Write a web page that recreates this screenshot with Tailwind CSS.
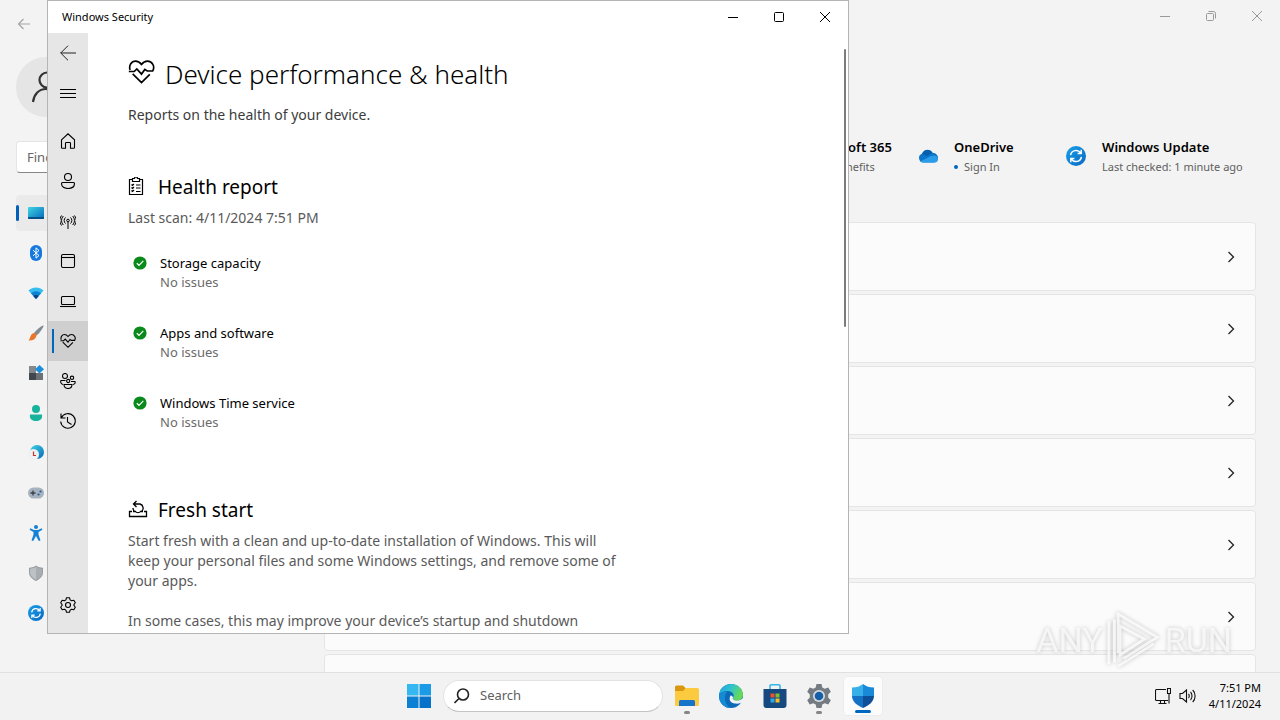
<!DOCTYPE html>
<html lang="en">
<head>
    <meta charset="UTF-8">
    <meta name="viewport" content="width=device-width, initial-scale=1.0">
    <title>Windows Security</title>
    <script src="https://cdn.jsdelivr.net/npm/@tailwindcss/browser@4"></script>
</head>
<body class="h-screen flex flex-col overflow-hidden bg-[#f3f3f3] font-['Noto_Sans','Open_Sans',sans-serif] text-black">

    <!-- Shared symbols -->
    <svg class="absolute w-0 h-0">
        <defs>
            <linearGradient id="blue" x1="0" y1="0" x2="1" y2="1"><stop offset="0" stop-color="#1aa0e8"/><stop offset="1" stop-color="#0869c3"/></linearGradient>
            <linearGradient id="teal" x1="0" y1="0" x2="1" y2="1"><stop offset="0" stop-color="#3fd5e6"/><stop offset="1" stop-color="#0668b8"/></linearGradient>
        </defs>
        <symbol id="chevron" viewBox="0 0 12 12"><path d="M3.5 1 8.5 6l-5 5" fill="none" stroke="#222" stroke-width="1.3"/></symbol>
        <symbol id="check" viewBox="0 0 14 14"><circle cx="7" cy="7" r="6.6" fill="#0b8a1c"/><path d="M3.8 7.2 6 9.3l4.300-4.400" fill="none" stroke="#fff" stroke-width="1.200"/></symbol>
        <symbol id="update" viewBox="0 0 20 20">
            <circle cx="10" cy="10" r="10" fill="url(#blue)"/>
            <path d="M4.600 9.200a5.500 5.500 0 0 1 10-2.300M15.400 10.800a5.500 5.500 0 0 1-10 2.300M15.200 3.800v3.600h-3.600M4.800 16.200v-3.600h3.600" fill="none" stroke="#fff" stroke-width="1.500"/>
        </symbol>
        <symbol id="heart" viewBox="0 0 26 24">
            <path d="M2 10C.500 5.500 3.500 1.500 7.200 1.500c2.600 0 4.300 1.200 5.800 3.200 1.500-2 3.200-3.200 5.800-3.200 4.500 0 7.500 5 5 9.500h-5.300l-2.300-1.500-3.200 4.500-4.500-5-2.500 2.500H.800M4.500 13.800 13 22.300l8-8"/>
        </symbol>
    </svg>

    <div class="relative flex-1 min-h-0 overflow-hidden">

        <!-- Settings window -->
        <div class="h-full flex">
            <aside class="w-[324px] shrink-0 px-4">
                <button aria-label="Back" class="block mt-4 h-4">
                    <svg class="w-4 h-4" viewBox="0 0 16 16" fill="none" stroke="#a6a6a6" stroke-width="1.200"><path d="M14 8H2.500M7.500 3l-5 5 5 5"/></svg>
                </button>
                <div class="mt-[25px] w-[60px] h-[60px] rounded-full bg-[#e5e5e5] flex items-center justify-center">
                    <svg class="w-8 h-8" viewBox="0 0 32 32" fill="none" stroke="#333" stroke-width="2.200"><circle cx="17" cy="9" r="7.500"/><path d="M3 31c1-8 6-13 13-13s12 5 13 13"/></svg>
                </div>
                <input type="text" aria-label="Find a setting" placeholder="Find a setting" class="mt-6 w-full h-8 px-2.5 rounded bg-white border border-[#e5e5e5] border-b-[#868686] text-[13px] placeholder:text-[#666]">
                <nav class="mt-[22px] flex flex-col gap-1">
                    <a href="#" aria-label="System" class="relative h-9 pl-3 rounded bg-[#eaeaea] flex items-center">
                        <span class="absolute left-0 w-[3px] h-4 rounded bg-[#005fb8]"></span>
                        <svg class="w-4 h-4" viewBox="0 0 16 16"><rect y="2" width="16" height="12" rx="1" fill="url(#teal)"/><path d="M0 12h16v1a1 1 0 0 1-1 1H1a1 1 0 0 1-1-1z" fill="#075087"/></svg>
                    </a>
                    <a href="#" aria-label="Bluetooth &amp; devices" class="h-9 pl-3 flex items-center">
                        <svg class="w-4 h-4" viewBox="0 0 16 16"><rect x="2" width="12" height="16" rx="6" fill="#1578df"/><path d="m5 5.200 6 5.300-3 2.700V2.800l3 2.700-6 5.300" fill="none" stroke="#fff"/></svg>
                    </a>
                    <a href="#" aria-label="Network &amp; internet" class="h-9 pl-3 flex items-center">
                        <svg class="w-4 h-4" viewBox="0 0 16 16"><path d="M.5 5.500c4-4 11-4 15 0L8 14z" fill="#36bdf0"/><path d="M3 8.200c3-2.700 7-2.700 10 0L8 14z" fill="#0d82d0"/><path d="M5.300 11c1.700-1.400 3.700-1.400 5.400 0L8 14z" fill="#0a3e87"/></svg>
                    </a>
                    <a href="#" aria-label="Personalization" class="h-9 pl-3 flex items-center">
                        <svg class="w-4 h-4" viewBox="0 0 16 16"><path d="M15.500.5c.8.800-4 8-7 10L6 8C8 5 14.500-.4 15.500.500z" fill="#818b92"/><path d="M6 8c2 0 3 1.500 2.300 3.200C7.500 14 5 15.700.5 15.500 2.500 13.500 2 9 6 8z" fill="#e9762b"/></svg>
                    </a>
                    <a href="#" aria-label="Apps" class="h-9 pl-3 flex items-center">
                        <svg class="w-4 h-4" viewBox="0 0 16 16"><path d="M1 1h7v7H1z" fill="#85898c"/><path d="M1 8h7v7H1z" fill="#42474d"/><path d="M8 8h7v7H8z" fill="#6c7175"/><path d="m11.500 0 4.500 4.300-4.500 4.200L7 4.300z" fill="#1b8fdc"/></svg>
                    </a>
                    <a href="#" aria-label="Accounts" class="h-9 pl-3 flex items-center">
                        <svg class="w-4 h-4" viewBox="0 0 16 16" fill="#18b39c"><circle cx="8" cy="4" r="4"/><path d="M2 9.500h12c1 5-3 6.500-6 6.500s-7-1.500-6-6.500z"/></svg>
                    </a>
                    <a href="#" aria-label="Time &amp; language" class="h-9 pl-3 flex items-center">
                        <svg class="w-4 h-4" viewBox="0 0 16 16"><circle cx="9" cy="7" r="7" fill="url(#teal)"/><circle cx="5.500" cy="9.500" r="5.500" fill="#eef0f2"/><path d="M5.500 6.500v4H8" fill="none" stroke="#c0392b" stroke-width="1.200"/></svg>
                    </a>
                    <a href="#" aria-label="Gaming" class="h-9 pl-3 flex items-center">
                        <svg class="w-4 h-4" viewBox="0 0 16 16"><rect y="2.500" width="16" height="11" rx="5.500" fill="#a6b2bd"/><path d="M5 5.500v5M2.500 8h5" stroke="#36414b" stroke-width="1.300"/><circle cx="10.500" cy="9.500" r="1.100" fill="#1b5e9b"/><circle cx="12.500" cy="6.500" r="1.100" fill="#1b5e9b"/></svg>
                    </a>
                    <a href="#" aria-label="Accessibility" class="h-9 pl-3 flex items-center">
                        <svg class="w-4 h-4" viewBox="0 0 16 16" fill="#1481d6"><circle cx="8" cy="2" r="2"/><path d="M2.300 3.200 6 5h4l3.700-1.800.7 1.500L10.500 7v2.500l2 6-1.700.5L8 11l-2.800 5-1.700-.5 2-6V7l-3.900-2.300z"/></svg>
                    </a>
                    <a href="#" aria-label="Privacy &amp; security" class="h-9 pl-3 flex items-center">
                        <svg class="w-4 h-4" viewBox="0 0 16 16"><path d="M8 1c2 1.500 4 2 6.500 2v4.500c0 4-3 6.500-6.500 8-3.500-1.500-6.500-4-6.500-8V3C4 3 6 2.500 8 1z" fill="#a8adb1" stroke="#8b8f93" stroke-width=".8"/><path d="M8 2v12.500C5 13 2.300 11 2.300 7.500V3.700C4.500 3.600 6.300 3 8 2z" fill="#bcc1c5"/></svg>
                    </a>
                    <a href="#" aria-label="Windows Update" class="h-9 pl-3 flex items-center">
                        <svg class="w-4 h-4"><use href="#update"/></svg>
                    </a>
                </nav>
            </aside>

            <main class="flex-1 min-w-0 pr-6">
                <div class="-mr-6 h-8 flex justify-end">
                    <button aria-label="Minimize settings" class="w-[46px] flex items-center justify-center"><svg class="w-3 h-3" viewBox="0 0 12 12" stroke="#999"><path d="M1 6.500h10"/></svg></button>
                    <button aria-label="Restore settings" class="w-[46px] flex items-center justify-center"><svg class="w-3 h-3" viewBox="0 0 12 12" fill="none" stroke="#999"><rect x="1.500" y="3.500" width="7" height="7" rx="1"/><path d="M3.500 1.500h5a2 2 0 0 1 2 2v5"/></svg></button>
                    <button aria-label="Close settings" class="w-[46px] flex items-center justify-center"><svg class="w-3 h-3" viewBox="0 0 12 12" stroke="#999"><path d="m1 1 10 10M11 1 1 11"/></svg></button>
                </div>
                <div class="mt-[105px] h-10 flex justify-end">
                    <div class="w-28 whitespace-nowrap">
                        <p class="text-[13px] leading-5 font-semibold">Microsoft 365</p>
                        <p class="text-[11px] leading-5 text-[#606060]">View benefits</p>
                    </div>
                    <div class="w-[148px] flex gap-4">
                        <svg class="w-5 h-[38px] shrink-0" viewBox="0 0 20 20"><path d="M5 16.500a4.500 4.500 0 0 1-1-8.700C5.500 3 12 2 14.500 6.700c3.500.3 5.500 2.500 5.500 5 0 2.800-2 4.800-4.500 4.800z" fill="#0b75c9"/><path d="M4 8c1.500-4.500 8-5.800 10.500-1.300L9 10z" fill="#0660ad"/><path d="M2 15.500 13 10c4-1.500 7 .5 7 3a3.700 3.700 0 0 1-4 3.500H5c-1.200 0-2.200-.4-3-1z" fill="#2b9ce8"/></svg>
                        <div>
                            <p class="text-[13px] leading-5 font-semibold">OneDrive</p>
                            <p class="text-[11px] leading-5 text-[#606060] flex items-center"><span class="w-1 h-1 mr-1.5 rounded-full bg-[#0067c0]"></span>Sign In</p>
                        </div>
                    </div>
                    <div class="w-[190px] flex gap-4">
                        <svg class="w-5 h-[38px] shrink-0"><use href="#update"/></svg>
                        <div class="whitespace-nowrap">
                            <p class="text-[13px] leading-5 font-semibold">Windows Update</p>
                            <p class="text-[11px] leading-5 text-[#606060]">Last checked: 1 minute ago</p>
                        </div>
                    </div>
                </div>
                <div id="settings-cards" class="mt-[45px] flex flex-col gap-[3px]"></div>
            </main>
        </div>

        <!-- Windows Security window -->
        <section class="absolute left-[47px] top-0 w-[802px] h-[634px] border border-[#b4b4b4] bg-white flex flex-col">
            <header class="h-8 shrink-0 flex justify-between">
                <h2 class="pl-3.5 text-[11px] leading-8">Windows Security</h2>
                <div class="flex">
                    <button aria-label="Minimize" class="w-[46px] flex items-center justify-center"><svg class="w-3 h-3" viewBox="0 0 12 12" stroke="#000"><path d="M1 6.500h10"/></svg></button>
                    <button aria-label="Maximize" class="w-[46px] flex items-center justify-center"><svg class="w-3 h-3" viewBox="0 0 12 12" fill="none" stroke="#000"><rect x="1.500" y="1.500" width="9" height="9" rx="1"/></svg></button>
                    <button aria-label="Close" class="w-[46px] flex items-center justify-center"><svg class="w-3 h-3" viewBox="0 0 12 12" stroke="#000"><path d="m1 1 10 10M11 1 1 11"/></svg></button>
                </div>
            </header>
            <div class="flex-1 min-h-0 flex">
                <nav class="w-10 shrink-0 pb-2 bg-[#e6e6e6] flex flex-col">
                    <button aria-label="Back" class="h-10 flex items-center justify-center"><svg class="w-4 h-4" viewBox="0 0 16 16" fill="none" stroke="#222"><path d="M16 8H.7M8 .700.700 8 8 15.300"/></svg></button>
                    <button aria-label="Open navigation" class="h-10 mb-2 flex items-center justify-center"><svg class="w-4 h-4" viewBox="0 0 16 16" stroke="#000"><path d="M0 4.500h16M0 8.500h16M0 12.500h16"/></svg></button>
                    <a href="#" aria-label="Home" class="h-10 flex items-center justify-center"><svg class="w-4 h-4" viewBox="0 0 16 16" fill="none" stroke="#000" stroke-width="1.100"><path d="M1.500 6.800 8 .800l6.500 6v7.700a.8.8 0 0 1-.8.800h-3.200v-5a.8.8 0 0 0-.8-.8H6.300a.8.8 0 0 0-.8.800v5H2.300a.8.8 0 0 1-.8-.8z"/></svg></a>
                    <a href="#" aria-label="Virus &amp; threat protection" class="h-10 flex items-center justify-center"><svg class="w-4 h-4" viewBox="0 0 16 16" fill="none" stroke="#000" stroke-width="1.100"><circle cx="8" cy="4" r="3.500"/><path d="M2.500 9.500h11c.6 0 1 .4 1 1 0 3.500-3 5-6.500 5s-6.500-1.500-6.500-5c0-.6.4-1 1-1z"/></svg></a>
                    <a href="#" aria-label="Firewall &amp; network protection" class="h-10 flex items-center justify-center"><svg class="w-4 h-4" viewBox="0 0 16 16" fill="none" stroke="#000"><circle cx="8" cy="7.500" r="1.300"/><path d="M8 9v7M5.500 10.500a4 4 0 0 1 0-6M10.500 10.500a4 4 0 0 0 0-6M3.300 12a6.500 6.500 0 0 1 0-9M12.700 12a6.500 6.500 0 0 0 0-9M1.500 12.500a8.500 8.500 0 0 1 0-10M14.500 12.500a8.500 8.500 0 0 0 0-10"/></svg></a>
                    <a href="#" aria-label="App &amp; browser control" class="h-10 flex items-center justify-center"><svg class="w-4 h-4" viewBox="0 0 16 16" fill="none" stroke="#000" stroke-width="1.100"><rect x="1.500" y="1.500" width="13" height="13" rx="1.500"/><path d="M1.500 4.500h13"/></svg></a>
                    <a href="#" aria-label="Device security" class="h-10 flex items-center justify-center"><svg class="w-4 h-4" viewBox="0 0 16 16" fill="none" stroke="#000" stroke-width="1.100"><rect x="1.500" y="3.500" width="13" height="8" rx="1"/><path d="M0 13.500h16"/></svg></a>
                    <a href="#" aria-label="Device performance &amp; health" aria-current="page" class="relative h-10 bg-[#cfcfcf] flex items-center justify-center">
                        <span class="absolute left-1 w-0.5 h-6 bg-[#0067c0]"></span>
                        <svg class="w-4 h-4 fill-none stroke-black stroke-[1.8]"><use href="#heart"/></svg>
                    </a>
                    <a href="#" aria-label="Family options" class="h-10 flex items-center justify-center"><svg class="w-4 h-4" viewBox="0 0 16 16" fill="none" stroke="#000" stroke-width="1.100"><circle cx="5" cy="3" r="2.500"/><circle cx="12" cy="4.800" r="1.700"/><circle cx="8.200" cy="8" r="1.600"/><path d="M4 11.500h8c0 2.500-1.500 4-4 4s-4-1.500-4-4zM5.500 7.500H1c-.8 1.500 0 3.500 2 4M11 8.500h4c.5 1.500-.3 2.800-2 3"/></svg></a>
                    <a href="#" aria-label="Protection history" class="h-10 flex items-center justify-center"><svg class="w-4 h-4" viewBox="0 0 16 16" fill="none" stroke="#000" stroke-width="1.100"><path d="M1 .500v4.500h4.500M1.300 5A7.300 7.300 0 1 1 .700 8.500M7.500 4v5l4 2.500"/></svg></a>
                    <a href="#" aria-label="Settings" class="h-10 mt-auto flex items-center justify-center"><svg class="w-4 h-4" viewBox="0 0 16 16" fill="none" stroke="#000" stroke-width="1.100" stroke-linejoin="round"><circle cx="8" cy="8" r="2.500"/><path d="m6.500.700 3 0 .6 2.200 1.500.9 2.200-.6 1.500 2.600L13.700 8l1.600 2.200-1.500 2.600-2.200-.6-1.500.9-.6 2.200h-3l-.6-2.200-1.500-.9-2.200.6L.700 10.200 2.300 8 .700 5.800l1.500-2.600 2.200.6 1.500-.9z"/></svg></a>
                </nav>

                <article class="relative flex-1 overflow-hidden pl-10 pt-[23px]">
                    <span class="absolute right-0.5 top-4 w-0.5 h-[278px] rounded bg-[#7c7c7c]"></span>
                    <div class="flex gap-2.5">
                        <svg class="w-[27px] h-8 fill-none stroke-black stroke-[1.6]"><use href="#heart"/></svg>
                        <h1 class="text-[26px] leading-9 font-light">Device performance &amp; health</h1>
                    </div>
                    <p class="mt-[13px] text-sm leading-5 text-[#3c3c3c]">Reports on the health of your device.</p>

                    <div class="mt-12 flex items-center gap-3">
                        <svg class="w-[18px] h-5" viewBox="0 0 18 20" fill="none" stroke="#000" stroke-width="1.200"><path d="M4.500 2.500h-3v15h13v-15h-3M4.500 4.500v-3h2c0-2 3-2 3 0h2v3zM3.500 7.500l1 1 1.500-1.500M3.500 10.500l1 1 1.500-1.500M3.500 13.500l1 1 1.500-1.500M8 8h4.500M8 11h4.500M8 14.500h4.500"/></svg>
                        <h2 class="text-[19px] leading-7">Health report</h2>
                    </div>
                    <p class="mt-[7px] text-sm leading-5 text-[#5a5a5a]">Last scan: 4/11/2024 7:51 PM</p>
                    <ul id="health-items" class="mt-[26px] flex flex-col gap-8"></ul>

                    <div class="mt-16 flex items-center gap-2.5">
                        <svg class="w-5 h-5" viewBox="0 0 20 20" fill="none" stroke="#000" stroke-width="1.300"><path d="M4 11.500H1.500v5h17v-5H16M1 13.500h1M5 11.500h2.500c1 1.500 4 1.500 5 0H15M5.500 4H12a4.300 4.300 0 0 1 1.500 7.500M8.500 1 5.500 4l3 3M6.500 11.500A5 5 0 0 1 5 8"/></svg>
                        <h2 class="text-[19px] leading-7">Fresh start</h2>
                    </div>
                    <div class="mt-[7px] w-[500px] text-sm leading-5 text-[#5a5a5a]">
                        <p>Start fresh with a clean and up-to-date installation of Windows. This will keep your personal files and some Windows settings, and remove some of your apps.</p>
                        <p class="mt-5">In some cases, this may improve your device’s startup and shutdown</p>
                    </div>
                </article>
            </div>
        </section>
    </div>

    <!-- Taskbar -->
    <footer class="h-12 shrink-0 pb-0.5 border-t border-[#e0e0e0] bg-[#f2f2f2] grid grid-cols-[1fr_auto_1fr] items-center">
        <div></div>
        <div class="ml-0.5 flex items-center gap-1">
            <button aria-label="Start" class="w-10 h-10 flex items-center justify-center">
                <svg class="w-6 h-6" viewBox="0 0 24 24"><path d="M0 0h11.500v11.500H0z" fill="#35b7f1"/><path d="M12.500 0H24v11.500H12.500z" fill="#1b9be6"/><path d="M0 12.500h11.500V24H0z" fill="#0c80d3"/><path d="M12.500 12.500H24V24H12.500z" fill="#0872cb"/></svg>
            </button>
            <label class="w-[220px] h-8 pl-2.5 rounded-full bg-white border border-[#e3e3e3] border-b-[#c4c4c4] flex items-center gap-2.5">
                <svg class="w-4 h-4 shrink-0" viewBox="0 0 16 16" fill="none" stroke="#222" stroke-width="1.600"><circle cx="9" cy="6.500" r="5.500"/><path d="M5 10.500.500 15"/></svg>
                <input type="text" aria-label="Search" placeholder="Search" class="w-full min-w-0 text-[13px] placeholder:text-[#606060] outline-none">
            </label>
            <button aria-label="File Explorer" class="relative w-10 h-10 flex items-center justify-center">
                <svg class="w-6 h-6" viewBox="0 0 24 24"><path d="M0 3a1.500 1.500 0 0 1 1.500-1.500H8L10.500 4v4H0z" fill="#d9960f"/><path d="M0 7h8l3-3h11.500A1.500 1.500 0 0 1 24 5.500v15a1.500 1.500 0 0 1-1.500 1.500h-21A1.500 1.500 0 0 1 0 20.500z" fill="#fbca3e"/><path d="M4 22v-4.500A1.500 1.500 0 0 1 5.500 16h13a1.500 1.500 0 0 1 1.500 1.500V22z" fill="#1574c8"/></svg>
                <span class="absolute bottom-0.5 w-1.5 h-[3px] rounded-full bg-[#868686]"></span>
            </button>
            <button aria-label="Microsoft Edge" class="w-10 h-10 flex items-center justify-center">
                <svg class="w-6 h-6" viewBox="0 0 24 24"><defs><linearGradient id="edge" x1="0" y1="0" x2="1" y2=".4"><stop offset="0" stop-color="#1b9fe0"/><stop offset=".5" stop-color="#30c2cf"/><stop offset="1" stop-color="#66d957"/></linearGradient></defs><circle cx="12" cy="12" r="12" fill="#0d6ab9"/><path d="M0 11C1 4 6 0 12 0c7 0 12 5 12 10.500 0 4-3 6-6 6-3.500 0-5-1.500-4-3C16 11 13.500 7 9 7c-4 0-7.500 1.500-9 4z" fill="url(#edge)"/><path d="M9 24C4 22.500 0 18 0 12c1-3.500 5-5 8.500-4.500C5 10 4.500 19 11 24z" fill="#178ad4"/><path d="M14 13.500c-1 1.500.500 3 4 3 2 0 4-.6 6-2.500v4c-1.500 1-4.500 2-7.900 1.500-4.500 0-7-4-4.500-8 1-.5 2.400 1 2.400 2z" fill="#f2f2f2"/></svg>
            </button>
            <button aria-label="Microsoft Store" class="w-10 h-10 flex items-center justify-center">
                <svg class="w-6 h-6" viewBox="0 0 24 24"><path d="M7 6V2a1.200 1.200 0 0 1 1.200-1.200h7.600A1.200 1.200 0 0 1 17 2v4" fill="none" stroke="#33b5e8" stroke-width="1.600"/><path d="M.5 5h23v16a3 3 0 0 1-3 3h-17a3 3 0 0 1-3-3z" fill="#16497f"/><path d="M7.500 9.500h4v4h-4z" fill="#f0512b"/><path d="M12.500 9.500h4v4h-4z" fill="#80bb31"/><path d="M7.500 14.500h4v4h-4z" fill="#2ba6ea"/><path d="M12.500 14.500h4v4h-4z" fill="#fbbb25"/></svg>
            </button>
            <button aria-label="Settings" class="relative w-10 h-10 flex items-center justify-center">
                <svg class="w-6 h-6" viewBox="0 0 24 24"><path d="m9.500 0h5l.8 3.500 2.400 1.300 3.600-1.300 2.500 4.300L21.200 10.500v3l2.600 2.700-2.500 4.300-3.600-1.300-2.400 1.300-.8 3.500h-5l-.8-3.500-2.400-1.300-3.600 1.300L.200 16.200l2.600-2.700v-3L.200 7.800l2.500-4.300 3.600 1.300 2.400-1.300z" fill="#747b82"/><circle cx="12" cy="12" r="6" fill="#d3dbe0"/><circle cx="12" cy="12" r="4.300" fill="#155fa9"/></svg>
                <span class="absolute bottom-0.5 w-1.5 h-[3px] rounded-full bg-[#868686]"></span>
            </button>
            <button aria-label="Windows Security" class="relative w-10 h-10 rounded bg-[#fcfcfc] border border-[#ececec] flex items-center justify-center">
                <svg class="w-6 h-6" viewBox="0 0 24 24"><path d="M12 0c3 2.500 6.500 3.500 11 3.500V12H12z" fill="#1a8ad8"/><path d="M12 0C9 2.500 5.500 3.500 1 3.500V12h11z" fill="#37b0ea"/><path d="M1 12h11v12C6 21.500 1 17.500 1 12z" fill="#1472c4"/><path d="M23 12H12v12c6-2.500 11-6.500 11-12z" fill="#0d4f98"/></svg>
                <span class="absolute bottom-0.5 w-4 h-[3px] rounded-full bg-[#0067c0]"></span>
            </button>
        </div>
        <div class="pr-[19px] flex items-center justify-end gap-2">
            <svg class="w-4 h-4" viewBox="0 0 16 16" fill="none" stroke="#111" stroke-width="1.100"><path d="M11 1.500H1.500a1 1 0 0 0-1 1v9a1 1 0 0 0 1 1H13M5.500 12.500v3M9.500 12.500v3M3.500 15.500h8M12.500.500h3v5h-3zM14 5.500v10"/></svg>
            <svg class="w-[18px] h-4" viewBox="0 0 18 16" fill="none" stroke="#111" stroke-width="1.100"><path d="M1 5.500h2.500L7.500 2v12L3.500 10.500H1zM9.500 6c1 1 1 3 0 4M11.500 4c2 2 2 6 0 8M13.700 2c3.200 3 3.200 9 0 12"/></svg>
            <div class="w-14 text-right text-[11px] leading-4 whitespace-nowrap">
                <p>7:51 PM</p>
                <p>4/11/2024</p>
            </div>
        </div>
    </footer>

    <!-- Watermark -->
    <div class="pointer-events-none absolute right-12 bottom-12 h-16 flex items-center gap-1 text-white/70 font-['Roboto',sans-serif] text-[34px] leading-none drop-shadow-[0_0_2px_#b0b0b0]">
        <span>ANY</span>
        <svg class="w-[54px] h-16" viewBox="0 0 58 64" fill="none" stroke="#fff" stroke-opacity=".75" stroke-width="3"><path d="M12 46V4l42 25L18 52M2 12v46M8 10v46M12 60l38-24M14 17l26 14-26 17z"/></svg>
        <span>RUN</span>
    </div>

    <script>
        const cards = ['Display', 'Sound', 'Notifications', 'Focus', 'Power', 'Storage', 'Nearby sharing'];
        document.getElementById('settings-cards').innerHTML = cards.map(title => `
            <a href="#" aria-label="${title}" class="h-[69px] shrink-0 px-[18px] rounded bg-[#fbfbfb] border border-[#e5e5e5] flex items-center justify-end">
                <svg class="w-3 h-3"><use href="#chevron"/></svg>
            </a>
        `).join('');

        const health = ['Storage capacity', 'Apps and software', 'Windows Time service'];
        document.getElementById('health-items').innerHTML = health.map(name => `
            <li class="pl-[5px] flex gap-[13px]">
                <svg class="mt-0.5 w-3.5 h-3.5"><use href="#check"/></svg>
                <div class="text-[13px] leading-[19px]">
                    <p>${name}</p>
                    <p class="text-[#6b6b6b]">No issues</p>
                </div>
            </li>
        `).join('');
    </script>
</body>
</html>
